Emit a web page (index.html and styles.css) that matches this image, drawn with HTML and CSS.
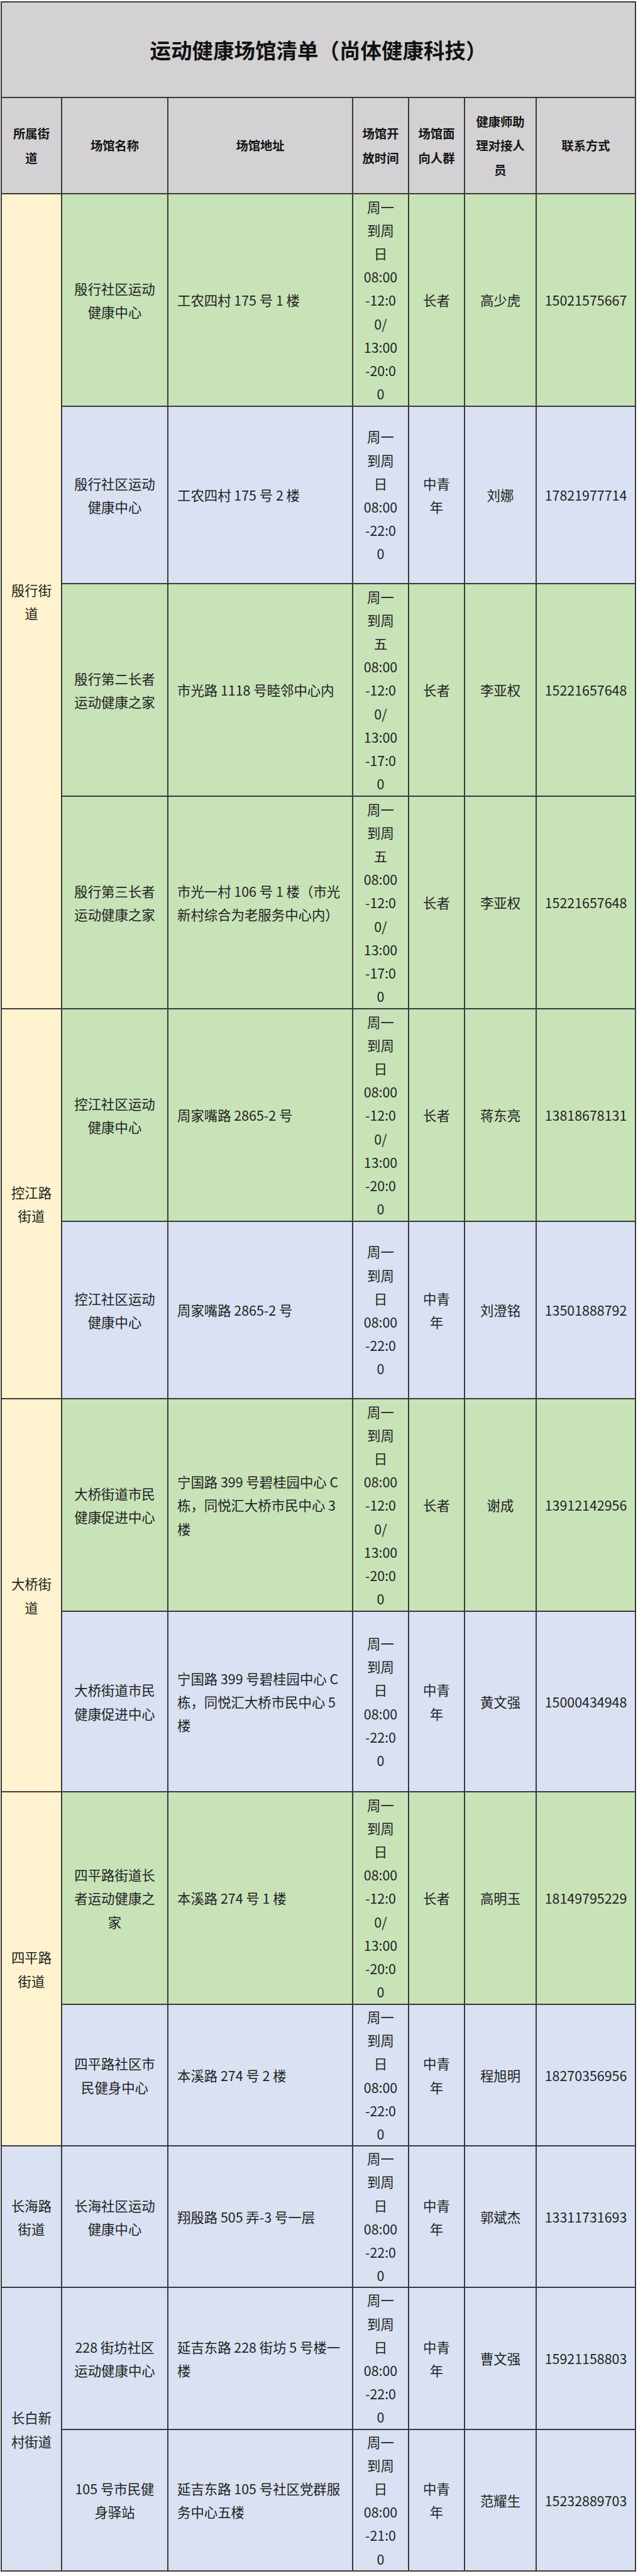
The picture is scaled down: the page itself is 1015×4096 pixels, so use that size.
FILE: index.html
```html
<!DOCTYPE html>
<html lang="zh-CN">
<head>
<meta charset="utf-8">
<title>运动健康场馆清单（尚体健康科技）</title>
<link rel="stylesheet" href="styles.css">
</head>
<body>
<table class="sheet">
  <colgroup>
    <col class="c-street"><col class="c-name"><col class="c-addr"><col class="c-time"><col class="c-crowd"><col class="c-staff"><col class="c-phone">
  </colgroup>
  <tbody>
    <tr class="r-title"><td colspan="7" class="title">运动健康场馆清单（尚体健康科技）</td></tr>
    <tr class="r-head">
      <th>所属街<br>道</th>
      <th>场馆名称</th>
      <th>场馆地址</th>
      <th>场馆开<br>放时间</th>
      <th>场馆面<br>向人群</th>
      <th>健康师助<br>理对接人<br>员</th>
      <th>联系方式</th>
    </tr>

    <tr class="r9 green">
      <td rowspan="4" class="street yellow">殷行街<br>道</td>
      <td>殷行社区运动<br>健康中心</td>
      <td class="addr">工农四村 175 号 1 楼</td>
      <td>周一<br>到周<br>日<br>08:00<br>-12:0<br>0/<br>13:00<br>-20:0<br>0</td>
      <td>长者</td>
      <td>高少虎</td>
      <td>15021575667</td>
    </tr>
    <tr class="r6 blue">
      <td>殷行社区运动<br>健康中心</td>
      <td class="addr">工农四村 175 号 2 楼</td>
      <td>周一<br>到周<br>日<br>08:00<br>-22:0<br>0</td>
      <td>中青<br>年</td>
      <td>刘娜</td>
      <td>17821977714</td>
    </tr>
    <tr class="r9 green">
      <td>殷行第二长者<br>运动健康之家</td>
      <td class="addr">市光路 1118 号睦邻中心内</td>
      <td>周一<br>到周<br>五<br>08:00<br>-12:0<br>0/<br>13:00<br>-17:0<br>0</td>
      <td>长者</td>
      <td>李亚权</td>
      <td>15221657648</td>
    </tr>
    <tr class="r9 green">
      <td>殷行第三长者<br>运动健康之家</td>
      <td class="addr">市光一村 106 号 1 楼（市光<br>新村综合为老服务中心内）</td>
      <td>周一<br>到周<br>五<br>08:00<br>-12:0<br>0/<br>13:00<br>-17:0<br>0</td>
      <td>长者</td>
      <td>李亚权</td>
      <td>15221657648</td>
    </tr>

    <tr class="r9 green">
      <td rowspan="2" class="street yellow">控江路<br>街道</td>
      <td>控江社区运动<br>健康中心</td>
      <td class="addr">周家嘴路 2865-2 号</td>
      <td>周一<br>到周<br>日<br>08:00<br>-12:0<br>0/<br>13:00<br>-20:0<br>0</td>
      <td>长者</td>
      <td>蒋东亮</td>
      <td>13818678131</td>
    </tr>
    <tr class="r6 blue">
      <td>控江社区运动<br>健康中心</td>
      <td class="addr">周家嘴路 2865-2 号</td>
      <td>周一<br>到周<br>日<br>08:00<br>-22:0<br>0</td>
      <td>中青<br>年</td>
      <td>刘澄铭</td>
      <td>13501888792</td>
    </tr>

    <tr class="r9 green">
      <td rowspan="2" class="street yellow">大桥街<br>道</td>
      <td>大桥街道市民<br>健康促进中心</td>
      <td class="addr">宁国路 399 号碧桂园中心 C<br>栋，同悦汇大桥市民中心 3<br>楼</td>
      <td>周一<br>到周<br>日<br>08:00<br>-12:0<br>0/<br>13:00<br>-20:0<br>0</td>
      <td>长者</td>
      <td>谢成</td>
      <td>13912142956</td>
    </tr>
    <tr class="r6b blue">
      <td>大桥街道市民<br>健康促进中心</td>
      <td class="addr">宁国路 399 号碧桂园中心 C<br>栋，同悦汇大桥市民中心 5<br>楼</td>
      <td>周一<br>到周<br>日<br>08:00<br>-22:0<br>0</td>
      <td>中青<br>年</td>
      <td>黄文强</td>
      <td>15000434948</td>
    </tr>

    <tr class="r9 green">
      <td rowspan="2" class="street yellow">四平路<br>街道</td>
      <td>四平路街道长<br>者运动健康之<br>家</td>
      <td class="addr">本溪路 274 号 1 楼</td>
      <td>周一<br>到周<br>日<br>08:00<br>-12:0<br>0/<br>13:00<br>-20:0<br>0</td>
      <td>长者</td>
      <td>高明玉</td>
      <td>18149795229</td>
    </tr>
    <tr class="r6s blue">
      <td>四平路社区市<br>民健身中心</td>
      <td class="addr">本溪路 274 号 2 楼</td>
      <td>周一<br>到周<br>日<br>08:00<br>-22:0<br>0</td>
      <td>中青<br>年</td>
      <td>程旭明</td>
      <td>18270356956</td>
    </tr>

    <tr class="r6s blue">
      <td class="street">长海路<br>街道</td>
      <td>长海社区运动<br>健康中心</td>
      <td class="addr">翔殷路 505 弄-3 号一层</td>
      <td>周一<br>到周<br>日<br>08:00<br>-22:0<br>0</td>
      <td>中青<br>年</td>
      <td>郭斌杰</td>
      <td>13311731693</td>
    </tr>

    <tr class="r6s blue">
      <td rowspan="2" class="street">长白新<br>村街道</td>
      <td>228 街坊社区<br>运动健康中心</td>
      <td class="addr">延吉东路 228 街坊 5 号楼一<br>楼</td>
      <td>周一<br>到周<br>日<br>08:00<br>-22:0<br>0</td>
      <td>中青<br>年</td>
      <td>曹文强</td>
      <td>15921158803</td>
    </tr>
    <tr class="r6s blue">
      <td>105 号市民健<br>身驿站</td>
      <td class="addr">延吉东路 105 号社区党群服<br>务中心五楼</td>
      <td>周一<br>到周<br>日<br>08:00<br>-21:0<br>0</td>
      <td>中青<br>年</td>
      <td>范耀生</td>
      <td>15232889703</td>
    </tr>
  </tbody>
</table>
</body>
</html>
```

FILE: styles.css
```css
html, body {
  margin: 0;
  padding: 0;
  background: #ffffff;
}

body {
  padding: 2px 0 0 1px;
  font-family: "Noto Sans CJK SC", "Noto Sans", sans-serif;
  color: #222222;
}

.sheet {
  table-layout: fixed;
  border-collapse: collapse;
  width: 1009px;
}

.c-street { width: 96px; }
.c-name   { width: 169px; }
.c-addr   { width: 294px; }
.c-time   { width: 89px; }
.c-crowd  { width: 89px; }
.c-staff  { width: 114px; }
.c-phone  { width: 158px; }

.sheet td,
.sheet th {
  border: 2px solid #3a3a3a;
  padding: 0 10px;
  text-align: center;
  vertical-align: middle;
  white-space: nowrap;
  overflow: visible;
}

.sheet td {
  font-size: 21.4px;
  line-height: 37.2px;
  font-weight: 400;
}

.r-title { height: 152px; }
.r-head  { height: 153px; }

.sheet td.title {
  background: #d3d1d3;
  font-size: 33.5px;
  line-height: 44px;
  font-weight: 700;
  color: #111111;
}

.sheet th {
  background: #d3d1d3;
  font-size: 19.3px;
  line-height: 38.5px;
  font-weight: 700;
  color: #141414;
  padding: 0 6px;
}

.r9  { height: 338px; }
.r6  { height: 282px; }
.r6b { height: 287px; }
.r6s { height: 225px; }

.green td { background: #c8e3b8; }
.blue td  { background: #d9e1f2; }
.sheet td.yellow { background: #fff3cf; }

.sheet td.addr {
  text-align: left;
  padding-left: 14px;
}
```
